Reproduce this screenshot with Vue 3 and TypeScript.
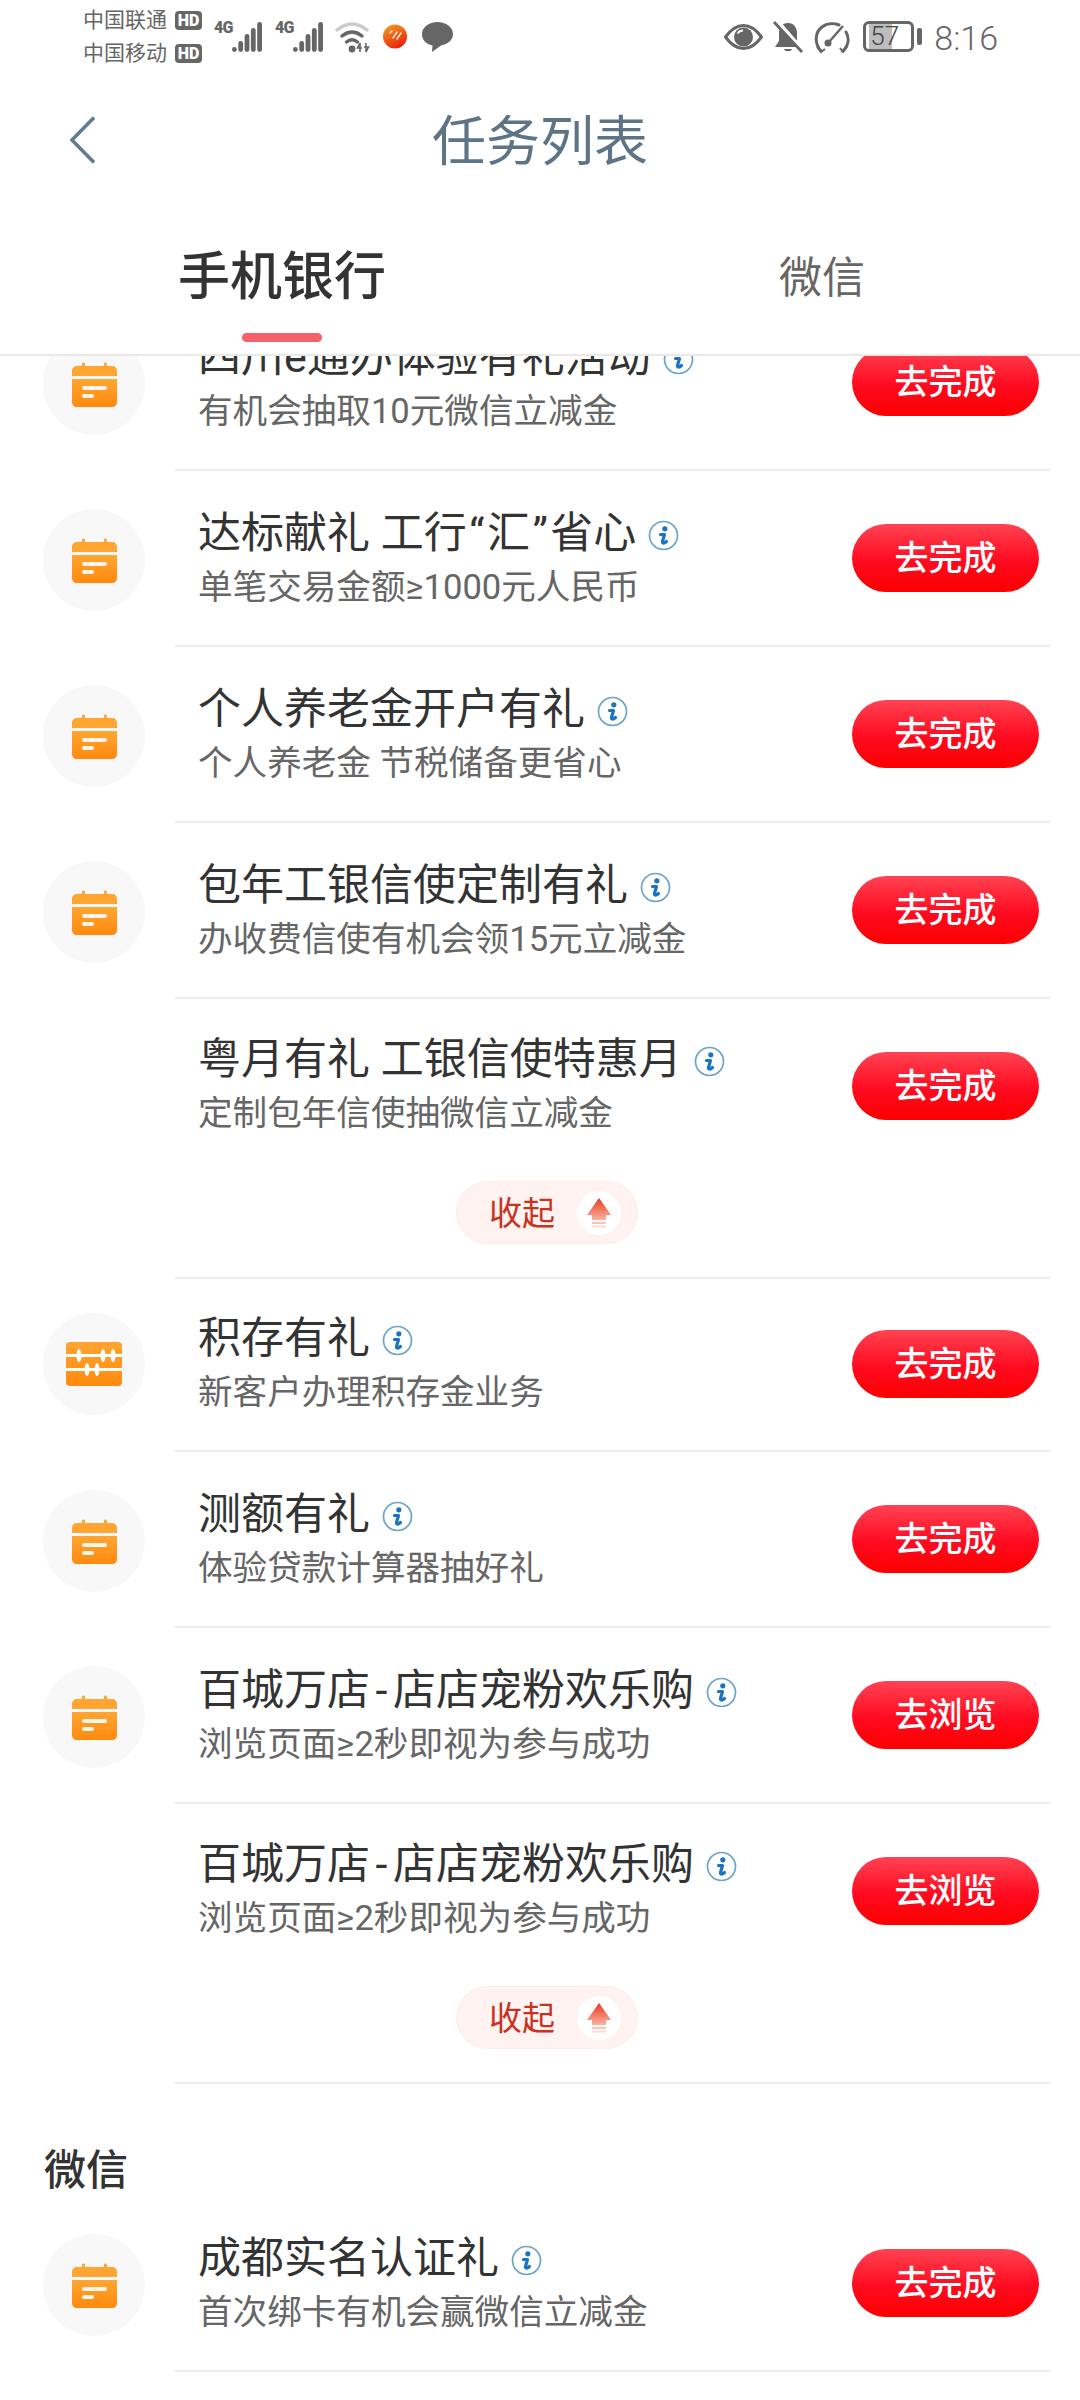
<script setup lang="ts">
interface Task {
  title: string
  sub: string
  icon?: 'cal' | 'abacus'
  action: string
  compact?: boolean
  pillGap?: boolean
}

const phone: Task[] = [
  { title: '四川e通办体验有礼活动', sub: '有机会抽取10元微信立减金', icon: 'cal', action: '去完成' },
  { title: '达标献礼 工行“汇”省心', sub: '单笔交易金额≥1000元人民币', icon: 'cal', action: '去完成' },
  { title: '个人养老金开户有礼', sub: '个人养老金 节税储备更省心', icon: 'cal', action: '去完成' },
  { title: '包年工银信使定制有礼', sub: '办收费信使有机会领15元立减金', icon: 'cal', action: '去完成' },
  { title: '粤月有礼 工银信使特惠月', sub: '定制包年信使抽微信立减金', action: '去完成', pillGap: true },
  { title: '积存有礼', sub: '新客户办理积存金业务', icon: 'abacus', action: '去完成', compact: true },
  { title: '测额有礼', sub: '体验贷款计算器抽好礼', icon: 'cal', action: '去完成' },
  { title: '百城万店-店店宠粉欢乐购', sub: '浏览页面≥2秒即视为参与成功', icon: 'cal', action: '去浏览' },
  { title: '百城万店-店店宠粉欢乐购', sub: '浏览页面≥2秒即视为参与成功', action: '去浏览', pillGap: true }
]

const wechat: Task[] = [
  { title: '成都实名认证礼', sub: '首次绑卡有机会赢微信立减金', icon: 'cal', action: '去完成' }
]

const groups: { label?: string; tasks: Task[] }[] = [
  { tasks: phone },
  { label: '微信', tasks: wechat }
]
const bars = [5, 11, 18, 24, 30]

// The reference font sets these marks wider than Roboto does.
const chunks = (title: string): { text: string; cls: string }[] =>
  title
    .split(/([-“”])/)
    .filter((text) => text !== '')
    .map((text) => ({ text, cls: text === '-' ? 'dash' : /^[“”]$/.test(text) ? 'quote' : '' }))
</script>

<template>
  <div class="page">
    <header class="head">
      <div class="status">
        <div class="carriers">
          <div class="carrier"><span>中国联通</span><b class="hd">HD</b></div>
          <div class="carrier"><span>中国移动</span><b class="hd">HD</b></div>
        </div>
        <div v-for="n in 2" :key="n" class="net">
          <span class="net-label">4G</span>
          <svg class="signal" width="30" height="31" viewBox="0 0 30 31">
            <rect v-for="(h, i) in bars" :key="i" :x="i * 6.3" :y="31 - h" width="4.8" :height="h" rx="2.4" fill="#666" />
          </svg>
        </div>
        <svg class="wifi" width="36" height="32" viewBox="0 0 36 32" fill="none" stroke-linecap="round">
          <path d="M2 9Q17 -3 32 9" stroke="#ccc" stroke-width="3.4" />
          <path d="M7 15Q17 7 27 15" stroke="#666" stroke-width="3.4" />
          <path d="M11.5 21Q17 16.5 22.5 21" stroke="#666" stroke-width="3.4" />
          <circle cx="17" cy="28" r="3.4" fill="#666" />
          <path d="M25 31V22L22.5 27H27M31 22V31L33.5 26H29" stroke="#666" stroke-width="1.6" stroke-linecap="butt" />
        </svg>
        <svg class="app" width="24" height="25" viewBox="0 0 24 25" fill="none">
          <defs>
            <linearGradient id="appFill" x1="0.2" y1="0" x2="0.7" y2="1">
              <stop offset="0" stop-color="#f59a1f" />
              <stop offset="1" stop-color="#ea1c0e" />
            </linearGradient>
          </defs>
          <circle cx="12" cy="12.5" r="12" fill="url(#appFill)" />
          <path d="M7 9L9 7M10 14L14 8M14 15L18 9" stroke="#ffe9d8" stroke-width="1.5" stroke-linecap="round" />
        </svg>
        <svg class="bubble" width="31" height="30" viewBox="0 0 31 30">
          <path d="M15.500 0C24 0 31 5 31 12C31 18 26 22 19 23.500L10 30L10.500 23.500C4 22 0 18 0 12C0 5 7 0 15.500 0Z" fill="#666" />
        </svg>

        <div class="status-right">
          <svg width="39" height="26" viewBox="0 0 39 26">
            <path d="M1.500 13C8 4 14 1.500 19.500 1.500C25 1.500 31 4 37.500 13C31 22 25 24.500 19.500 24.500C14 24.500 8 22 1.500 13Z" fill="#fff" stroke="#666" stroke-width="3" />
            <circle cx="19.500" cy="13" r="9.500" fill="#666" />
            <path d="M13.500 9.500A6.500 6.500 0 0 1 19 6.500" stroke="#fff" stroke-width="1.800" fill="none" />
          </svg>
          <svg class="bell" width="30" height="32" viewBox="0 0 30 32">
            <path d="M15 2C9 2 6 7 6 12V20L2 26H28L24 20V12C24 7 21 2 15 2Z" fill="#666" />
            <path d="M11 28H19C18.500 31 11.500 31 11 28Z" fill="#666" />
            <path d="M2 -2L30 30" stroke="#fff" stroke-width="4.500" />
            <path d="M1 1L29 31" stroke="#666" stroke-width="2.800" />
          </svg>
          <svg class="gauge" width="36" height="32" viewBox="0 0 36 32" fill="none" stroke="#666" stroke-width="3">
            <path d="M7 30C0 22 1 11 8 6C13 2 20 2 25 4" stroke-linecap="round" />
            <path d="M32 11C36 18 34 25 29 30" stroke-linecap="round" />
            <path d="M15 21L29 5" stroke-width="2.400" />
            <circle cx="14" cy="22" r="3.500" fill="#666" stroke="none" />
            <path d="M3 26L7 31L11 28M33 26L29 31L26 27" stroke-width="2" />
          </svg>
          <div class="battery"><span>57</span></div>
          <i class="nub"></i>
          <span class="time">8:16</span>
        </div>
      </div>

      <nav class="nav">
        <svg class="back" width="26" height="48" viewBox="0 0 26 48" fill="none">
          <path d="M24 1.500L2 24L24 46.500" stroke="#617d8f" stroke-width="3.600" />
        </svg>
        <h1>任务列表</h1>
      </nav>

      <div class="tabs">
        <div class="tab on">手机银行<i></i></div>
        <div class="tab">微信</div>
      </div>
    </header>

    <main class="list">
      <div class="scroller">
        <section v-for="(group, g) in groups" :key="g">
          <h2 v-if="group.label">{{ group.label }}</h2>
          <article v-for="(task, t) in group.tasks" :key="t" class="row" :class="{ compact: task.compact, folded: task.pillGap }">
            <div class="badge" :class="{ blank: !task.icon }">
              <svg v-if="task.icon === 'cal'" width="45" height="45" viewBox="0 0 45 45">
                <defs>
                  <linearGradient id="calFill" x1="0" y1="0" x2="0" y2="1">
                    <stop offset="0" stop-color="#ffa531" />
                    <stop offset="1" stop-color="#ff8a0e" />
                  </linearGradient>
                </defs>
                <path d="M0 14V9C0 6 2 4 5 4H10V2C10 0 13 0 13 2V4H32V2C32 0 35 0 35 2V4H40C43 4 45 6 45 9V14Z" fill="#ffa531" />
                <path d="M0 17H45V40C45 43 43 45 40 45H5C2 45 0 43 0 40Z" fill="url(#calFill)" />
                <rect x="10" y="24" width="25" height="4" rx="2" fill="#fff" opacity=".9" />
                <rect x="10" y="32" width="12" height="4" rx="2" fill="#fff" opacity=".9" />
              </svg>
              <svg v-else-if="task.icon === 'abacus'" width="56" height="44" viewBox="0 0 56 44">
                <defs>
                  <linearGradient id="abFill" x1="0" y1="0" x2="0" y2="1">
                    <stop offset="0" stop-color="#ffa531" />
                    <stop offset="1" stop-color="#ff8a0e" />
                  </linearGradient>
                </defs>
                <rect width="56" height="44" rx="4" fill="url(#abFill)" />
                <rect y="12" width="56" height="3" fill="#fff" />
                <rect y="26" width="56" height="3" fill="#fff" />
                <ellipse cx="13" cy="13.500" rx="2.500" ry="6.500" fill="#fff" />
                <ellipse cx="37" cy="13.500" rx="2.500" ry="6.500" fill="#fff" />
                <ellipse cx="47" cy="13.500" rx="2.500" ry="6.500" fill="#fff" />
                <ellipse cx="21" cy="27.500" rx="2.500" ry="6.500" fill="#fff" />
                <ellipse cx="31" cy="27.500" rx="2.500" ry="6.500" fill="#fff" />
              </svg>
            </div>
            <div class="body">
              <div class="main">
                <div class="text">
                  <div class="title">
                    <span><span v-for="(c, k) in chunks(task.title)" :key="k" :class="c.cls">{{ c.text }}</span></span>
                    <svg class="info" width="31" height="31" viewBox="0 0 31 31" fill="none">
                      <circle cx="15.500" cy="15.500" r="14" stroke="#6aa5c9" stroke-width="1.700" />
                      <circle cx="16.800" cy="8.800" r="2.600" fill="#1b74c3" />
                      <path d="M12.500 14.500H16.500L14.500 21.500C14.200 23.500 16 23.800 18.500 21.500" stroke="#1b74c3" stroke-width="3.200" stroke-linejoin="round" stroke-linecap="round" />
                    </svg>
                  </div>
                  <div class="sub">{{ task.sub }}</div>
                </div>
                <button class="go" type="button">{{ task.action }}</button>
              </div>
              <div v-if="task.pillGap" class="pill">
                <span class="pill-text">收起</span>
                <span class="pill-icon">
                  <svg width="24" height="30" viewBox="0 0 24 30">
                    <defs>
                      <linearGradient id="arrowFill" x1="0" y1="0" x2="0" y2="1">
                        <stop offset="0" stop-color="#e63a1c" />
                        <stop offset="1" stop-color="#fbb1a2" />
                      </linearGradient>
                    </defs>
                    <path d="M12 0L24 17H19V22H5V17H0Z" fill="url(#arrowFill)" />
                    <rect x="5" y="24" width="14" height="2" fill="#fbc4b8" />
                    <rect x="5" y="27.500" width="14" height="2" fill="#fdd9d1" />
                  </svg>
                </span>
              </div>
            </div>
          </article>
        </section>
      </div>
    </main>
  </div>
</template>

<style>
html, body { margin: 0; background: #fff; }
</style>

<style scoped>
.page {
  width: 1080px;
  height: 2400px;
  overflow: hidden;
  background: #fff;
  display: flex;
  flex-direction: column;
  font-family: Roboto, "Noto Sans CJK SC", sans-serif;
}
.head {
  flex: none;
  height: 356px;
  box-sizing: border-box;
  border-bottom: 2px solid #e9e9e9;
}
.status {
  height: 73px;
  display: flex;
  align-items: center;
  padding: 0 82px 0 83px;
  color: #666;
}
.carriers { width: 119px; margin-right: 12px; }
.carrier {
  height: 33px;
  display: flex;
  align-items: center;
  justify-content: space-between;
  font-size: 21px;
  line-height: 33px;
}
.hd {
  width: 27px;
  height: 19px;
  border-radius: 4px;
  background: #666;
  color: #fff;
  font-size: 16px;
  line-height: 19px;
  font-weight: 900;
  text-align: center;
}
.net {
  display: flex;
  align-items: flex-end;
  height: 31px;
  width: 48px;
  margin-right: 13px;
  gap: 1px;
}
.net-label {
  align-self: flex-start;
  width: 17px;
  font-size: 16px;
  line-height: 14px;
  font-weight: 900;
  letter-spacing: -0.8px;
}
.signal { flex: none; }
.wifi { margin-right: 12px; margin-left: -1px; }
.app { margin-right: 15px; }
.status-right {
  margin-left: auto;
  display: flex;
  align-items: center;
}
.bell { margin-left: 10px; }
.gauge { margin-left: 11px; }
.battery {
  box-sizing: border-box;
  width: 51px;
  height: 31px;
  margin-left: 13px;
  border: 3px solid #666;
  border-radius: 6px;
  background: linear-gradient(90deg, #fff 3px, #bdbdbd 3px, #bdbdbd 26px, #fff 26px);
  color: #444;
  font-size: 26px;
  line-height: 25px;
  font-weight: 300;
  text-align: center;
}
.battery span { display: block; margin-right: 8px; }
.nub {
  width: 5px;
  height: 17px;
  margin-left: 3px;
  border-radius: 2px;
  background: #666;
}
.time {
  margin-left: 12px;
  padding-top: 2px;
  font-size: 34px;
  line-height: 40px;
  font-weight: 300;
  color: #666;
}
.nav {
  height: 100px;
  margin-top: 17px;
  display: grid;
  grid-template-columns: 1fr auto 1fr;
  align-items: center;
  padding-left: 70px;
  padding-right: 70px;
}
.back { justify-self: start; }
h1 {
  grid-column: 2;
  margin: 0;
  padding-top: 6px;
  font-size: 54px;
  line-height: 70px;
  font-weight: 400;
  color: #5c7486;
}
.tabs {
  display: flex;
  align-items: flex-start;
  gap: 393px;
  margin-top: 53px;
  padding-left: 178px;
}
.tab {
  display: flex;
  flex-direction: column;
  align-items: center;
  font-size: 43px;
  line-height: 70px;
  color: #666;
}
.tab.on {
  font-size: 52px;
  font-weight: 500;
  color: #333;
}
.tab i {
  width: 80px;
  height: 9px;
  margin-top: 20px;
  border-radius: 5px;
  background: #f5616b;
}
.list {
  flex: 1;
  min-height: 0;
  overflow: hidden;
}
.scroller { margin-top: -61px; }
h2 {
  margin: 0;
  height: 112px;
  box-sizing: border-box;
  padding: 60px 0 0 44px;
  font-size: 42px;
  line-height: 54px;
  font-weight: 500;
  color: #333;
}
.row {
  display: flex;
  align-items: flex-start;
  padding-left: 43px;
}
.badge {
  flex: none;
  width: 102px;
  height: 102px;
  margin: 38px 30px 0 0;
  border-radius: 50%;
  background: #f8f8f8;
  display: flex;
  align-items: center;
  justify-content: center;
}
.badge.blank { background: transparent; }
.compact .badge { margin-top: 34px; }
.body {
  flex: 1;
  min-width: 0;
  margin-right: 30px;
  border-bottom: 2px solid #eeeeee;
}
.main {
  display: flex;
  align-items: center;
  justify-content: space-between;
  padding: 31px 11px 31px 23px;
}
.text { padding-top: 4px; }
.compact .main { padding-top: 30px; }
.compact .text { padding-top: 2px; }
.folded .text { padding-top: 2px; padding-bottom: 2px; }
.title {
  display: flex;
  align-items: center;
  gap: 12px;
  font-size: 43px;
  line-height: 54px;
  color: #333;
}
.dash { padding: 0 5.5px; }
.quote { padding: 0 2.5px; }
.info { flex: none; margin-top: 4px; }
.sub {
  font-size: 34.6px;
  line-height: 54px;
  color: #666;
}
.go {
  flex: none;
  width: 187px;
  height: 68px;
  padding: 0;
  border: 0;
  border-radius: 34px;
  background: linear-gradient(180deg, #ff4352 0%, #ff0a20 55%, #fb0000 100%);
  color: #fff;
  font-family: inherit;
  font-size: 34px;
  line-height: 68px;
  font-weight: 500;
}
.pill {
  box-sizing: border-box;
  width: 182px;
  height: 63px;
  margin: 8px 0 33px 281px;
  padding: 0 16px 0 32px;
  display: flex;
  align-items: center;
  justify-content: space-between;
  border-radius: 32px;
  background: #fff3f2;
  border: 1px solid #fdeceb;
  color: #c8321e;
  font-size: 33px;
}
.pill-text { margin-bottom: 3px; }
.pill-icon {
  width: 44px;
  height: 44px;
  border-radius: 50%;
  background: #fff;
  display: flex;
  align-items: center;
  justify-content: center;
}
</style>
